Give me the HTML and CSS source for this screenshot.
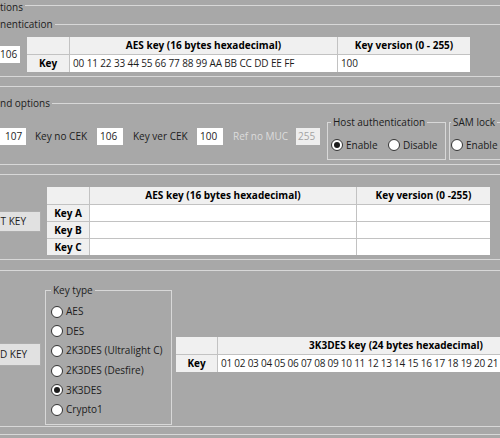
FILE: index.html
```html
<!DOCTYPE html>
<html lang="en">
<head>
<meta charset="utf-8">
<title>Key settings</title>
<link rel="stylesheet" href="styles.css">
</head>
<body>
<div class="page">

  <section class="group g-outer">
    <div class="legend-row top-legend"><span class="legend">tions</span><span class="rule"></span></div>
    <section class="group g-auth">
      <div class="legend-row"><span class="legend">nentication</span><span class="rule"></span></div>
      <div class="auth-row">
        <div class="textbox tb-keyno">106</div>
        <div class="grid grid-2rows">
          <div class="hd"></div>
          <div class="hd">AES key (16 bytes hexadecimal)</div>
          <div class="hd">Key version (0 - 255)</div>
          <div class="rh">Key</div>
          <div class="cell">00 11 22 33 44 55 66 77 88 99 AA BB CC DD EE FF</div>
          <div class="cell">100</div>
        </div>
      </div>
    </section>
  </section>

  <section class="group g-options">
    <div class="legend-row"><span class="legend">nd options</span><span class="rule"></span></div>
    <div class="options-row">
      <div class="textbox tb-first">107</div>
      <span class="label lbl-keyno">Key no CEK</span>
      <div class="textbox">106</div>
      <span class="label lbl-keyver">Key ver CEK</span>
      <div class="textbox">100</div>
      <span class="label lbl-ref disabled">Ref no MUC</span>
      <div class="textbox tb-disabled">255</div>
      <fieldset class="box box-host">
        <legend>Host authentication</legend>
        <div class="radio-row">
          <span class="radio opt-first"><span class="circle checked"></span>Enable</span>
          <span class="radio"><span class="circle"></span>Disable</span>
        </div>
      </fieldset>
      <fieldset class="box box-sam">
        <legend>SAM lock</legend>
        <div class="radio-row">
          <span class="radio opt-first"><span class="circle"></span>Enable</span>
        </div>
      </fieldset>
    </div>
  </section>

  <section class="group g-keys">
    <div class="keys-row">
      <button class="btn btn-set">T KEY</button>
      <div class="grid grid-4rows">
        <div class="hd"></div>
        <div class="hd">AES key (16 bytes hexadecimal)</div>
        <div class="hd">Key version (0 -255)</div>
        <div class="rh">Key A</div><div class="cell"></div><div class="cell"></div>
        <div class="rh">Key B</div><div class="cell"></div><div class="cell"></div>
        <div class="rh">Key C</div><div class="cell"></div><div class="cell"></div>
      </div>
    </div>
  </section>

  <section class="group g-load">
    <div class="load-row">
      <button class="btn btn-load">D KEY</button>
      <fieldset class="box box-type">
        <legend>Key type</legend>
        <div class="type-list">
          <span class="radio type-opt"><span class="circle"></span>AES</span>
          <span class="radio type-opt"><span class="circle"></span>DES</span>
          <span class="radio type-opt"><span class="circle"></span>2K3DES (Ultralight C)</span>
          <span class="radio type-opt"><span class="circle"></span>2K3DES (Desfire)</span>
          <span class="radio type-opt"><span class="circle checked"></span>3K3DES</span>
          <span class="radio type-opt"><span class="circle"></span>Crypto1</span>
        </div>
      </fieldset>
      <div class="grid grid-3des">
        <div class="hd"></div>
        <div class="hd">3K3DES key (24 bytes hexadecimal)</div>
        <div class="rh">Key</div>
        <div class="cell cell-3des">01 02 03 04 05 06 07 08 09 10 11 12 13 14 15 16 17 18 19 20 21</div>
      </div>
    </div>
  </section>

  <section class="group g-last"></section>

</div>
</body>
</html>
```

FILE: styles.css
```css
html, body {
  margin: 0;
  padding: 0;
}

body {
  width: 500px;
  height: 438px;
  overflow: hidden;
  background: #a8a8a8;
  color: #1c1c1c;
  font-family: "Open Sans", "Noto Sans", "Liberation Sans", sans-serif;
  font-size: 10px;
  line-height: 11px;
}

.page {
  width: 600px;
}

/* ---------- group boxes ---------- */
.group {
  border-bottom: 1px solid #d8d8d8;
}

.legend-row {
  display: flex;
  align-items: center;
  height: 11px;
}

.top-legend {
  align-items: flex-start;
}

.top-legend .legend {
  padding-top: 2px;
}

.top-legend .rule {
  margin-top: 5px;
}

.legend {
  padding-right: 2px;
  white-space: nowrap;
}

.rule {
  flex: 1;
  height: 1px;
  background: #d8d8d8;
}

.g-outer {
  padding-bottom: 9px;
}

.g-auth {
  margin-top: 8px;
  padding-bottom: 4px;
}

.auth-row {
  display: flex;
  align-items: flex-start;
  gap: 7px;
  margin-top: 7px;
}

.g-options {
  margin-top: 11px;
  padding-bottom: 4px;
}

.options-row {
  display: flex;
  align-items: flex-start;
  margin-top: 8px;
}

.g-keys {
  margin-top: 9px;
  border-top: 1px solid #d8d8d8;
  padding-bottom: 4px;
}

.keys-row {
  display: flex;
  align-items: flex-start;
  gap: 6px;
}

.g-load {
  margin-top: 10px;
  border-top: 1px solid #d8d8d8;
  padding-bottom: 1px;
}

.load-row {
  display: flex;
  align-items: flex-start;
}

.g-last {
  margin-top: 7px;
  border-top: 1px solid #d8d8d8;
  border-bottom: none;
  height: 10px;
}

/* ---------- text boxes & labels ---------- */
.textbox {
  box-sizing: border-box;
  width: 26px;
  height: 17px;
  margin-top: 11px;
  padding-left: 3px;
  background: #ffffff;
  line-height: 17px;
  white-space: nowrap;
}

.tb-keyno {
  width: 20px;
  margin-top: 9px;
  padding-left: 0;
  padding-right: 4px;
  text-align: right;
}

.tb-first {
  padding-left: 5px;
}

.tb-disabled {
  width: 24px;
  margin-left: 4px;
  padding-left: 2px;
  background: #eeeeee;
  color: #a3a3a3;
}

.label {
  margin-top: 11px;
  line-height: 17px;
  white-space: nowrap;
}

.lbl-keyno {
  width: 53px;
  margin-left: 9px;
  margin-right: 9px;
}

.lbl-keyver {
  width: 54px;
  margin-left: 10px;
  margin-right: 10px;
}

.lbl-ref {
  width: 59px;
  margin-left: 10px;
}

.disabled {
  color: #dcdcdc;
}

/* ---------- fieldsets ---------- */
.box {
  margin: 0;
  border: 1px solid #d8d8d8;
  min-width: 0;
}

.box legend {
  padding: 0 2px;
  line-height: 11px;
  white-space: nowrap;
}

.box-host {
  width: 119px;
  box-sizing: border-box;
  margin-left: 7px;
  padding: 0 0 8px 3px;
}

.box-sam {
  width: 100px;
  box-sizing: border-box;
  margin-left: 3px;
  padding: 0 0 8px 1px;
}

.radio-row {
  display: flex;
  align-items: center;
  height: 12px;
  margin-top: 11px;
}

.radio {
  display: inline-flex;
  align-items: center;
  gap: 3px;
  white-space: nowrap;
}

.opt-first {
  width: 57px;
}

.circle {
  box-sizing: border-box;
  flex: none;
  width: 12px;
  height: 12px;
  border: 1px solid #333333;
  border-radius: 50%;
  background: #ffffff;
  display: inline-flex;
  align-items: center;
  justify-content: center;
}

.circle.checked::after {
  content: "";
  width: 6px;
  height: 6px;
  border-radius: 50%;
  background: #1c1c1c;
}

.box-type {
  width: 127px;
  box-sizing: border-box;
  margin: 14px 0 0 4px;
  padding: 0 0 4px 5px;
}

.type-list {
  display: flex;
  flex-direction: column;
  margin-top: 6px;
}

.type-opt {
  height: 19.6px;
}

/* ---------- buttons ---------- */
.btn {
  box-sizing: border-box;
  width: 41px;
  padding: 0 14px 0 0;
  border: 1px solid #adadad;
  border-left: none;
  background: #e1e1e1;
  color: #1c1c1c;
  font: inherit;
  text-align: right;
  white-space: nowrap;
}

.btn-set {
  height: 21px;
  margin-top: 36px;
}

.btn-load {
  height: 23px;
  margin-top: 72px;
}

/* ---------- grids (data tables) ---------- */
.grid {
  display: grid;
  gap: 1px;
  background: #c2c2c2;
  flex: none;
}

.grid > div {
  overflow: hidden;
  white-space: nowrap;
}

.grid-2rows {
  grid-template-columns: 42px 267px 132px;
  grid-template-rows: 17px 17px;
}

.grid-4rows {
  margin-top: 12px;
  grid-template-columns: 42px 266px 133px;
  grid-template-rows: 17px 16px 16px 16px;
}

.grid-3des {
  margin: 66px 0 0 4px;
  grid-template-columns: 41px 356px;
  grid-template-rows: 17px 17px;
}

.hd,
.rh {
  background: #f0f0f0;
  color: #000000;
  font-weight: 700;
  text-align: center;
  line-height: 17px;
}

.grid-4rows .rh {
  line-height: 16px;
}

.cell {
  background: #ffffff;
  padding-left: 3px;
  line-height: 17px;
  letter-spacing: -0.13px;
}

.cell-3des {
  letter-spacing: -0.24px;
}

.grid-4rows .cell {
  line-height: 16px;
}
```
